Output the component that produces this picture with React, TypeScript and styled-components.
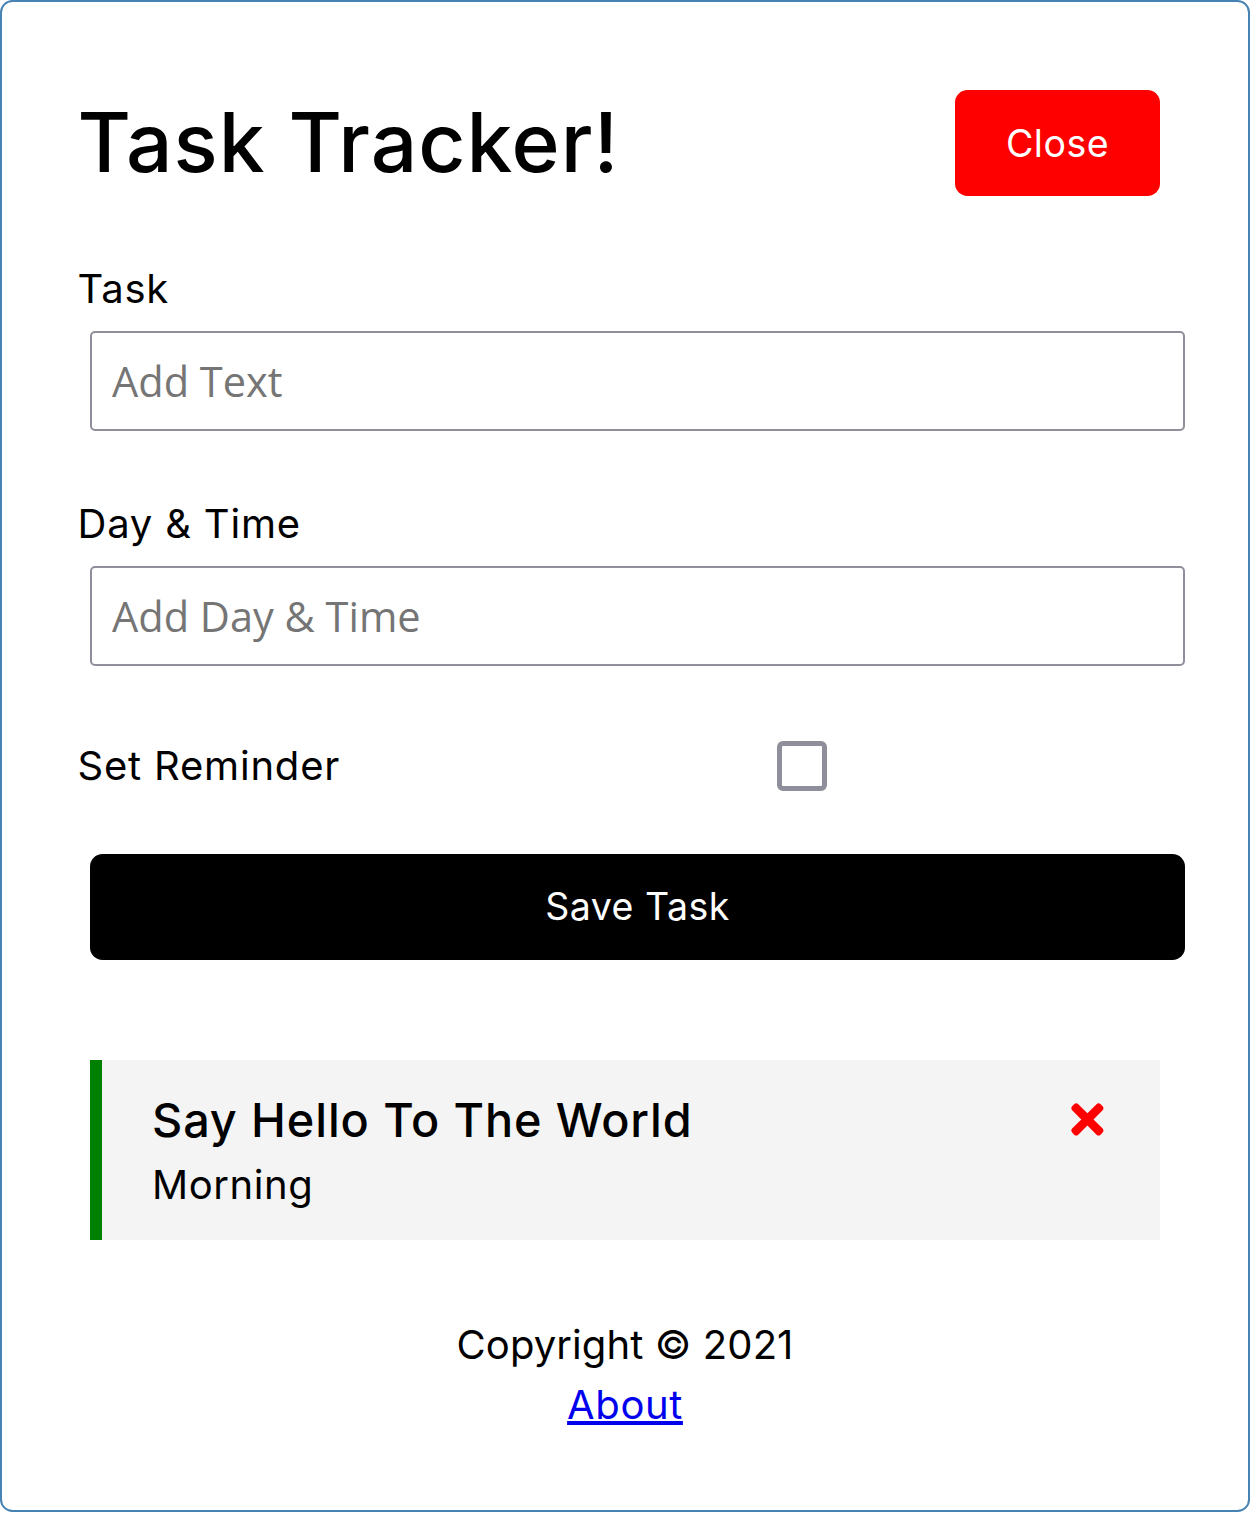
import React from "react";
import styled, { createGlobalStyle } from "styled-components";
import { FaTimes } from "react-icons/fa";

const GlobalStyle = createGlobalStyle`
  * { box-sizing: border-box; }
  html, body { margin: 0; padding: 0; background: #fff; }
  body { font-family: Inter, "Noto Sans", sans-serif; color: #000; }
`;

const Container = styled.div`
  width: 1250px;
  margin: 0;
  border: 2px solid steelblue;
  border-radius: 12.5px;
  padding: 75.5px;
  overflow: hidden;
`;

const Header = styled.header`
  display: flex;
  justify-content: space-between;
  align-items: center;
  margin-bottom: 50px;
`;

const Title = styled.h1`
  margin: 0;
  font-size: 82px;
  line-height: 120px;
  font-weight: 500;
  letter-spacing: 1px;
`;

const Button = styled.button<{ $bg: string; $block?: boolean }>`
  display: ${(p) => (p.$block ? "block" : "inline-block")};
  width: ${(p) => (p.$block ? "100%" : "205px")};
  height: 106px;
  margin: 12.5px;
  padding: 0;
  border: none;
  border-radius: 12.5px;
  background: ${(p) => p.$bg};
  color: #fff;
  font-family: Inter, "Noto Sans", sans-serif;
  font-size: 37.5px;
  letter-spacing: 0.5px;
  cursor: pointer;
`;

const Form = styled.form`
  margin-bottom: 100px;
`;

const FormControl = styled.div`
  display: flow-root;
  margin: 50px 0;
`;

const CheckRow = styled.div`
  margin: 50px 0;
  display: flex;
  align-items: center;
  height: 75px;
`;

const Label = styled.label`
  display: block;
  font-size: 40px;
  line-height: 60px;
  letter-spacing: 0.8px;
`;

const CheckLabel = styled(Label)`
  width: 699.5px;
`;

const TextInput = styled.input`
  display: block;
  width: 100%;
  height: 100px;
  margin: 12.5px;
  padding: 7.5px 20px;
  border: 2px solid #8f8e9b;
  border-radius: 5px;
  font-family: "Open Sans", "Noto Sans", sans-serif;
  font-size: 41.5px;
  &::placeholder {
    color: #757575;
  }
`;

const Checkbox = styled.input`
  appearance: none;
  width: 50px;
  height: 50px;
  margin: 0;
  border: 5px solid #8f8e9b;
  border-radius: 6px;
  background: #fff;
`;

const Task = styled.div`
  margin: 12.5px;
  padding: 25px 50px;
  background: #f4f4f4;
  border-left: 12.5px solid green;
  cursor: pointer;
`;

const TaskTitle = styled.h3`
  display: flex;
  align-items: center;
  justify-content: space-between;
  margin: 0;
  font-size: 46.8px;
  line-height: 70px;
  font-weight: 500;
  letter-spacing: 0.9px;
`;

const DeleteIcon = styled(FaTimes)`
  color: red;
  font-size: 46.8px;
  margin-right: -1px;
`;

const TaskDay = styled.p`
  margin: 0;
  font-size: 40px;
  line-height: 60px;
  letter-spacing: 0.6px;
`;

const Footer = styled.footer`
  margin-top: 75px;
  text-align: center;
`;

const FooterText = styled.p`
  margin: 0;
  font-size: 40px;
  line-height: 60px;
  letter-spacing: 0.1px;
`;

const FooterLink = styled.a`
  color: #0000ee;
  text-decoration: underline;
  font-size: 40px;
  line-height: 60px;
  letter-spacing: 0.6px;
`;

export default function App() {
  return (
    <>
      <GlobalStyle />
      <Container>
        <Header>
          <Title>Task Tracker!</Title>
          <Button $bg="red" type="button">Close</Button>
        </Header>
        <Form onSubmit={(e) => e.preventDefault()}>
          <FormControl>
            <Label>Task</Label>
            <TextInput type="text" placeholder="Add Text" />
          </FormControl>
          <FormControl>
            <Label>Day &amp; Time</Label>
            <TextInput type="text" placeholder="Add Day & Time" />
          </FormControl>
          <CheckRow>
            <CheckLabel>Set Reminder</CheckLabel>
            <Checkbox type="checkbox" />
          </CheckRow>
          <Button $bg="#000" $block type="submit">Save Task</Button>
        </Form>
        <Task>
          <TaskTitle>
            Say Hello To The World
            <DeleteIcon />
          </TaskTitle>
          <TaskDay>Morning</TaskDay>
        </Task>
        <Footer>
          <FooterText>Copyright © 2021</FooterText>
          <FooterLink href="#">About</FooterLink>
        </Footer>
      </Container>
    </>
  );
}
